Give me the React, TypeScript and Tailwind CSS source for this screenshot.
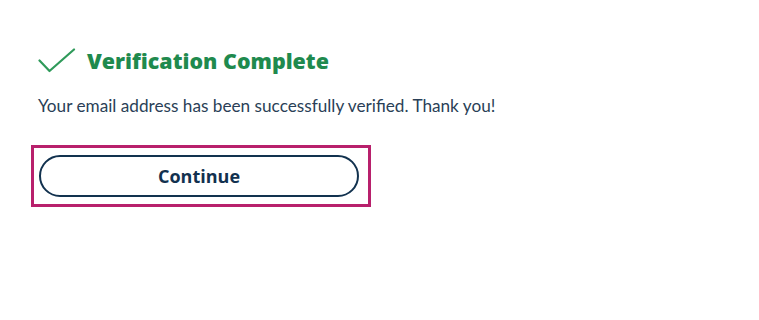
import React from 'react';

const CheckIcon: React.FC = () => (
  <svg width="38" height="26" viewBox="0 0 38 26" fill="none" className="shrink-0">
    <path d="M1.5 12.5 L11.5 23 L36 1.5" stroke="#2f9a5a" strokeWidth="2.2" strokeLinecap="round" strokeLinejoin="round" />
  </svg>
);

export default function App() {
  return (
    <div className="w-[759px] h-[320px] bg-white pl-[38px] pt-[48px]" style={{ fontFamily: '"Lato", "Noto Sans", sans-serif' }}>
      <div className="flex items-center gap-[11px]">
        <CheckIcon />
        <h1
          className="text-[21.4px] leading-[26px] font-extrabold text-[#1f8a4e]"
          style={{ fontFamily: '"Open Sans", "Noto Sans", sans-serif' }}
        >
          Verification Complete
        </h1>
      </div>
      <p className="mt-[21px] text-[17.2px] leading-[22px] text-[#2a3f57]">
        Your email address has been successfully verified. Thank you!
      </p>
      <div className="mt-[28px] -ml-[7px] w-[340px] border-[3px] border-[#b8206c] px-[5px] py-[7px]">
        <button
          type="button"
          className="w-[320px] h-[42px] rounded-full border-2 border-[#12324f] bg-white text-[18px] font-bold text-[#12314f]"
          style={{ fontFamily: '"Open Sans", "Noto Sans", sans-serif' }}
        >
          Continue
        </button>
      </div>
    </div>
  );
}
